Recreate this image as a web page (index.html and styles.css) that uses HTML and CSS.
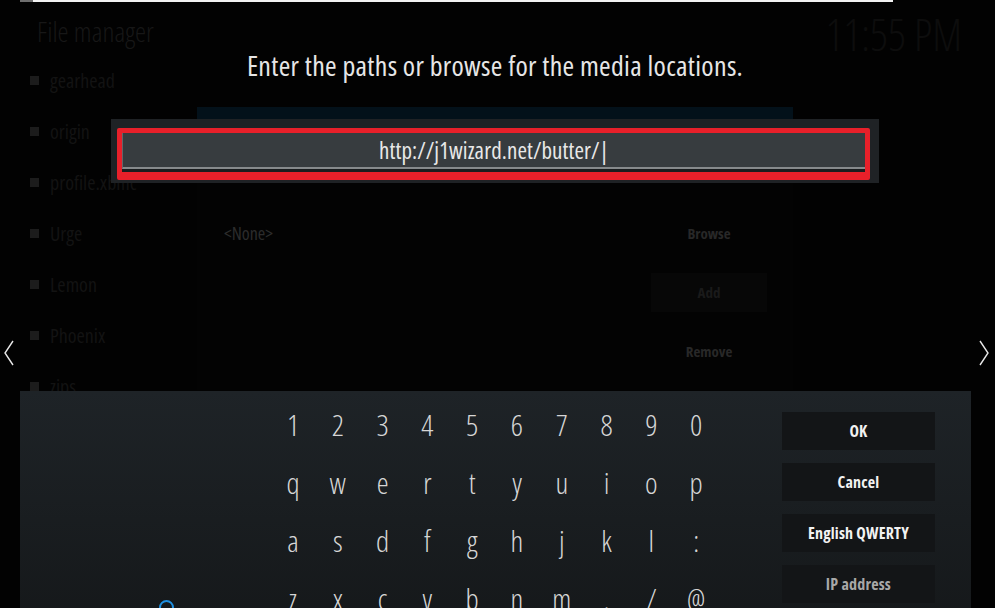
FILE: index.html
```html
<!DOCTYPE html>
<html lang="en">
<head>
    <meta charset="UTF-8">
    <title>File manager - Add source</title>
    <link rel="stylesheet" href="styles.css">
</head>
<body>
    <div class="screen">
        <!-- file manager window, dimmed behind the keyboard -->
        <div class="fm">
            <div class="topline"><span class="topline-cap"></span></div>
            <header class="fm-head">
                <h1>File manager</h1>
                <span class="clock">11:55 PM</span>
            </header>
            <div class="fm-body">
                <ul class="sources">
                    <li>gearhead</li>
                    <li>origin</li>
                    <li>profile.xbmc</li>
                    <li>Urge</li>
                    <li>Lemon</li>
                    <li>Phoenix</li>
                    <li>zips</li>
                </ul>
                <section class="source-dialog">
                    <div class="dialog-strip"></div>
                    <div class="dialog-body">
                        <div class="path-list">&lt;None&gt;</div>
                        <div class="dialog-buttons">
                            <span>Browse</span>
                            <span class="boxed">Add</span>
                            <span>Remove</span>
                        </div>
                    </div>
                </section>
            </div>
        </div>

        <!-- on-screen keyboard -->
        <div class="kb-overlay">
            <h2 class="kb-title">Enter the paths or browse for the media locations.</h2>
            <div class="kb-field-wrap">
                <div class="kb-field-frame">
                    <div class="kb-field">http://j1wizard.net/butter/|</div>
                </div>
            </div>
            <div class="kb-panel">
                <div class="keys">
                    <span>1</span><span>2</span><span>3</span><span>4</span><span>5</span>
                    <span>6</span><span>7</span><span>8</span><span>9</span><span>0</span>
                    <span>q</span><span>w</span><span>e</span><span>r</span><span>t</span>
                    <span>y</span><span>u</span><span>i</span><span>o</span><span>p</span>
                    <span>a</span><span>s</span><span>d</span><span>f</span><span>g</span>
                    <span>h</span><span>j</span><span>k</span><span>l</span><span>:</span>
                    <span>z</span><span>x</span><span>c</span><span>v</span><span>b</span>
                    <span>n</span><span>m</span><span>.</span><span>/</span><span>@</span>
                </div>
                <div class="kb-actions">
                    <button class="kb-btn">OK</button>
                    <button class="kb-btn">Cancel</button>
                    <button class="kb-btn">English QWERTY</button>
                    <button class="kb-btn dim">IP address</button>
                </div>
                <span class="busy"></span>
            </div>
        </div>

        <svg class="nav nav-left" width="12" height="26" viewBox="0 0 12 26">
            <path d="M10 1 L2 13 L10 25" fill="none" stroke="#e8e8e8" stroke-width="1.4"/>
        </svg>
        <svg class="nav nav-right" width="12" height="26" viewBox="0 0 12 26">
            <path d="M2 1 L10 13 L2 25" fill="none" stroke="#e8e8e8" stroke-width="1.4"/>
        </svg>
    </div>
</body>
</html>
```

FILE: styles.css
```css
body {
    margin: 0;
    background: #000;
    font-family: 'Open Sans', 'Noto Sans', sans-serif;
    font-stretch: 75%;
}
.screen {
    position: relative;
    width: 995px;
    height: 608px;
    overflow: hidden;
    background: #020202;
}

/* background window */
.topline {
    margin-left: 20px;
    width: 873px;
    height: 2px;
    background: #f2f2f2;
}
.topline-cap {
    display: block;
    width: 13px;
    height: 2px;
    background: #6e6e6e;
}
.fm-head {
    display: flex;
    justify-content: space-between;
    align-items: flex-start;
    height: 53px;
    padding: 0 33px 0 37px;
}
.fm-head h1 {
    margin: 12px 0 0;
    font-size: 28px;
    font-weight: 300;
    line-height: 34px;
    color: #171717;
}
.clock {
    margin-top: 7px;
    font-size: 44px;
    font-weight: 300;
    line-height: 50px;
    color: #0d0d0d;
}
.fm-body {
    display: flex;
}
.sources {
    list-style: none;
    margin: 0;
    padding: 0 0 0 30px;
    width: 197px;
    box-sizing: border-box;
}
.sources li {
    display: flex;
    align-items: center;
    gap: 11px;
    height: 51px;
    font-size: 20px;
    color: #131313;
}
.sources li::before {
    content: '';
    width: 9px;
    height: 9px;
    background: #1c1c1c;
}
.source-dialog {
    margin-top: 52px;
    width: 596px;
    height: 283px;
    background: #030303;
}
.dialog-strip {
    height: 18px;
    background: #03111a;
}
.dialog-body {
    display: flex;
    justify-content: space-between;
    padding: 79px 0 0 27px;
}
.path-list {
    font-size: 18px;
    line-height: 59px;
    color: #2c2c2c;
}
.dialog-buttons {
    display: flex;
    flex-direction: column;
    width: 116px;
    margin-right: 26px;
}
.dialog-buttons span {
    height: 59px;
    text-align: center;
    font-size: 15px;
    font-weight: 700;
    line-height: 59px;
    color: #282828;
}
.dialog-buttons .boxed {
    height: 39px;
    padding: 10px 0;
    line-height: 39px;
    background: #070707;
    background-clip: content-box;
    color: #1a1a1a;
}

/* keyboard layer */
.kb-overlay {
    position: absolute;
    inset: 0;
    display: flex;
    flex-direction: column;
}
.kb-title {
    margin: 48px 5px 0 0;
    font-size: 28px;
    font-weight: 400;
    letter-spacing: 0.3px;
    line-height: 34px;
    text-align: center;
    color: #e6e6e6;
}
.kb-field-wrap {
    margin: 37px 0 0 111px;
    width: 768px;
    height: 64px;
    padding: 9px 9px 3px 6px;
    box-sizing: border-box;
    background: #1f2225;
}
.kb-field-frame {
    height: 100%;
    box-sizing: border-box;
    border: 5px solid #e8202a;
    border-bottom-width: 8px;
    border-radius: 2px;
    padding-bottom: 3px;
    background: #1a1d1f;
}
.kb-field {
    height: 36px;
    box-sizing: border-box;
    border-left: 1px solid #62676a;
    border-bottom: 2px solid #868a8c;
    background: #373c3f;
    font-size: 23px;
    letter-spacing: 0.1px;
    line-height: 34px;
    text-align: center;
    color: #e8e8e8;
}
.kb-panel {
    position: relative;
    display: flex;
    align-items: flex-start;
    margin: 208px 0 0 20px;
    width: 951px;
    height: 240px;
    background: linear-gradient(#1e2327, #15181a);
}
.keys {
    display: grid;
    grid-template-columns: repeat(10, 44.8px);
    grid-auto-rows: 58px;
    margin: 5px 0 0 250.6px;
}
.keys span {
    text-align: center;
    font-size: 30px;
    font-weight: 300;
    line-height: 58px;
    color: #d6d6d6;
}
.kb-actions {
    display: flex;
    flex-direction: column;
    gap: 13px;
    margin: 21px 0 0 63.4px;
}
.kb-btn {
    width: 153px;
    height: 38px;
    padding: 0;
    border: none;
    background: #131517;
    font-family: inherit;
    font-stretch: 75%;
    font-size: 16px;
    font-weight: 700;
    letter-spacing: 0.2px;
    color: #f2f2f2;
}
.kb-btn.dim {
    color: #a8a8a8;
}
.busy {
    position: absolute;
    left: 139px;
    top: 209px;
    width: 11px;
    height: 11px;
    border: 2px solid #1f8fe0;
    border-radius: 50%;
}

/* paging arrows */
.nav {
    position: absolute;
    top: 340px;
}
.nav-left {
    left: 3px;
}
.nav-right {
    left: 978px;
}
```
